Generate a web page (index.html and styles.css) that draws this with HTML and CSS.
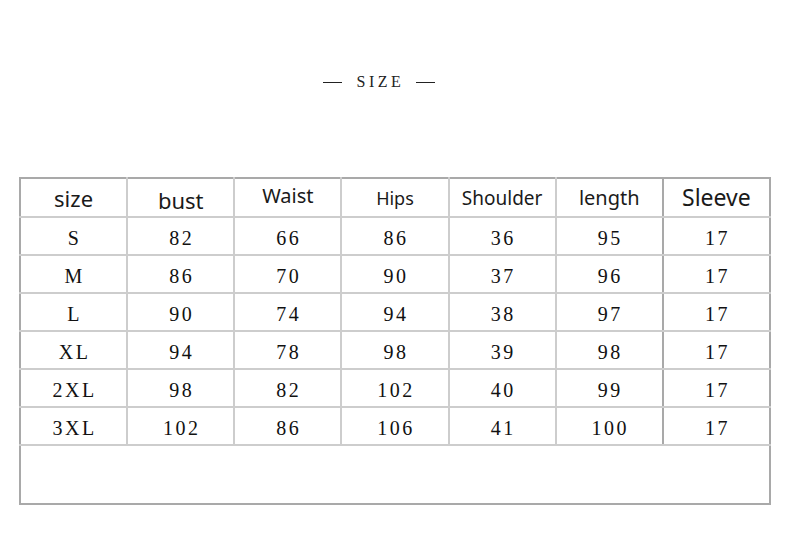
FILE: index.html
```html
<!DOCTYPE html>
<html>
<head>
<meta charset="utf-8">
<link rel="stylesheet" href="styles.css">
</head>
<body>
<div class="page">
  <div class="title">
    <span class="dash"></span>
    <span class="title-text">SIZE</span>
    <span class="dash"></span>
  </div>
  <table class="chart">
    <thead>
      <tr>
        <th class="h-size"><span>size</span></th>
        <th class="h-bust"><span>bust</span></th>
        <th class="h-waist"><span>Waist</span></th>
        <th class="h-hips"><span>Hips</span></th>
        <th class="h-shoulder"><span>Shoulder</span></th>
        <th class="h-length"><span>length</span></th>
        <th class="h-sleeve sleeve"><span>Sleeve</span></th>
      </tr>
    </thead>
    <tbody>
      <tr><td>S</td><td>82</td><td>66</td><td>86</td><td>36</td><td>95</td><td class="sleeve">17</td></tr>
      <tr><td>M</td><td>86</td><td>70</td><td>90</td><td>37</td><td>96</td><td class="sleeve">17</td></tr>
      <tr><td>L</td><td>90</td><td>74</td><td>94</td><td>38</td><td>97</td><td class="sleeve">17</td></tr>
      <tr><td>XL</td><td>94</td><td>78</td><td>98</td><td>39</td><td>98</td><td class="sleeve">17</td></tr>
      <tr><td>2XL</td><td>98</td><td>82</td><td>102</td><td>40</td><td>99</td><td class="sleeve">17</td></tr>
      <tr><td>3XL</td><td>102</td><td>86</td><td>106</td><td>41</td><td>100</td><td class="sleeve">17</td></tr>
      <tr class="blank"><td colspan="7"></td></tr>
    </tbody>
  </table>
</div>
</body>
</html>
```

FILE: styles.css
```css
html, body {
  margin: 0;
  padding: 0;
  background: #ffffff;
}

.page {
  width: 790px;
  height: 533px;
  padding-top: 73px;
  box-sizing: border-box;
}

.title {
  display: flex;
  align-items: center;
  justify-content: center;
  gap: 12px;
  height: 18px;
  width: 758px;
}

.dash {
  display: block;
  width: 19px;
  height: 1px;
  background: #222;
}

.title-text {
  font-family: "Liberation Serif", serif;
  font-size: 16px;
  letter-spacing: 3.5px;
  color: #222;
  padding-left: 3px;
}

.chart {
  margin: 86px 0 0 19px;
  width: 752px;
  border-collapse: collapse;
  table-layout: fixed;
  border: 2px solid #a9a9a9;
}

.chart th,
.chart td {
  border: 2px solid #cdcdcd;
  text-align: center;
  vertical-align: middle;
  padding: 0;
  color: #111;
}

.chart th {
  height: 37px;
  font-family: "Noto Sans", "Open Sans", sans-serif;
  font-weight: normal;
  color: #1a1a1a;
  line-height: 1;
}

.chart th span {
  display: inline-block;
}

.chart td {
  height: 32px;
  padding-top: 4px;
  font-family: "Liberation Serif", serif;
  font-size: 20px;
  line-height: 22px;
  letter-spacing: 2.5px;
  text-indent: 2px;
}

.chart th:nth-child(6),
.chart td:nth-child(6) {
  border-right: 2px solid #a9a9a9;
}

.chart .sleeve {
  border-left: 2px solid #a9a9a9;
}

.chart tr:first-child th { border-top: 2px solid #a9a9a9; }
.chart th:first-child, .chart td:first-child { border-left: 2px solid #a9a9a9; }
.chart th:last-child, .chart td:last-child { border-right: 2px solid #a9a9a9; }

.h-size { font-size: 22px; }
.h-bust { font-size: 22px; }
.h-bust span { transform: translateY(2px); }
.h-waist { font-size: 20px; }
.h-waist span { transform: translateY(-2px); }
.h-hips { font-size: 18px; }
.h-shoulder { font-size: 19px; }
.h-shoulder span { transform: translateY(1px); }
.h-length { font-size: 20px; }
.h-sleeve { font-size: 23px; }

.chart tr.blank td {
  height: 57px;
  padding: 0;
  border: 2px solid #a9a9a9;
  border-top: 2px solid #cdcdcd;
}
```
